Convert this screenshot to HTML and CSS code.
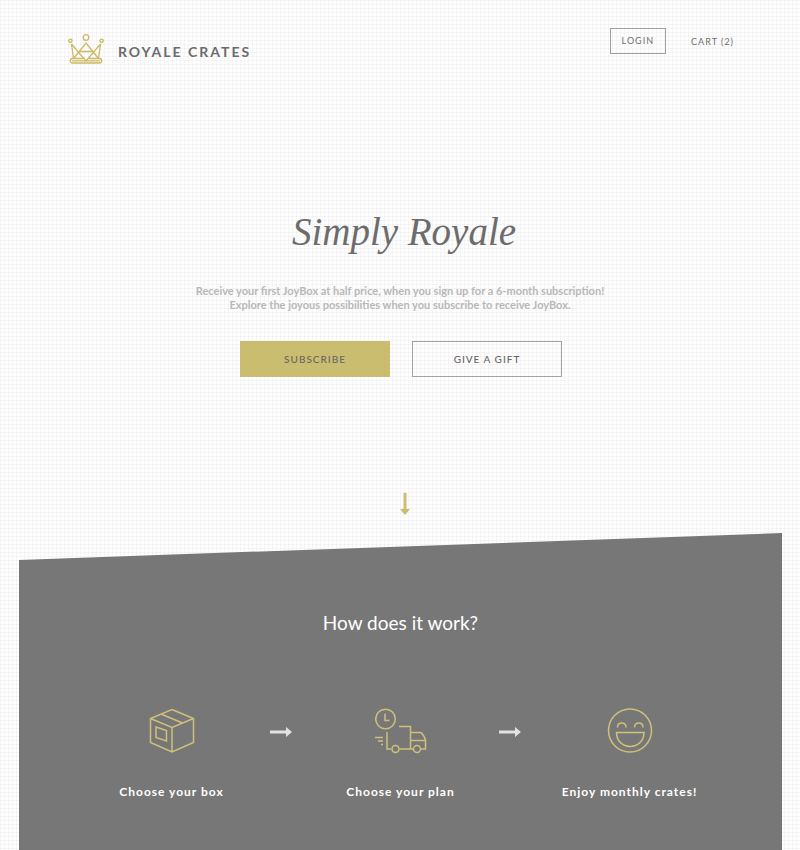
FILE: index.html
```html
<!DOCTYPE html>
<html lang="en">
<head>
<meta charset="utf-8">
<meta name="viewport" content="width=device-width, initial-scale=1">
<title>Royale Crates</title>
<link rel="stylesheet" href="styles.css">
</head>
<body>
<header class="header">
  <a class="brand" href="#">
    <svg class="crown" viewBox="0 0 36 30" aria-hidden="true">
      <circle cx="18" cy="3.5" r="2.8"/><circle cx="2.4" cy="6.8" r="1.7"/><circle cx="33.600" cy="6.800" r="1.700"/>
      <path d="M3.500 10 5.500 24.500M32.500 10 30.500 24.500M3.500 10 18 27 32.500 10M5.500 24.500 18 9 30.500 24.500M11 17.500H25"/>
      <path d="M15 24.500H4.500A2.200 2.200 0 0 0 4.500 29H31.500A2.200 2.200 0 0 0 31.500 24.500H21M4 26.800H32"/>
    </svg>
    <span class="brand-name">ROYALE CRATES</span>
  </a>
  <nav class="nav">
    <a class="login" href="#">LOGIN</a>
    <a class="cart" href="#">CART (2)</a>
  </nav>
</header>
<main>
  <section class="hero">
    <h1 class="title">Simply Royale</h1>
    <p class="intro">Receive your first JoyBox at half price, when you sign up for a 6-month subscription!<br>Explore the joyous possibilities when you subscribe to receive JoyBox.</p>
    <div class="actions">
      <button class="button primary" type="button">SUBSCRIBE</button>
      <button class="button" type="button">GIVE A GIFT</button>
    </div>
    <svg class="down" viewBox="0 0 10 22" aria-hidden="true"><path d="M3.500 0h3v16H10L5 22 0 16h3.500Z"/></svg>
  </section>
  <section class="how">
    <h2 class="how-title">How does it work?</h2>
    <div class="steps">
      <div class="step">
        <svg class="icon" viewBox="0 0 52 46" aria-hidden="true">
          <path d="M26 1.500 47.500 10.500V34.500L26 44 4.500 34.500V10.500ZM4.500 10.500 26 19.500 47.500 10.500M26 19.500V44M15 6 36.500 15"/>
          <path d="M10 19 20.500 22.500V33L10 29.500Z"/>
        </svg>
        <h3 class="step-title">Choose your box</h3>
      </div>
      <svg class="next" viewBox="0 0 22 10" aria-hidden="true"><path d="M0 3.500h16V0L22 5 16 10V6.500H0Z"/></svg>
      <div class="step">
        <svg class="icon" viewBox="0 0 52 46" aria-hidden="true">
          <circle cx="10.500" cy="11" r="9.800"/><path d="M10 5.500V12.500H14.500"/>
          <path d="M24 18.500H35.500V41M12 24V41H16M24.500 41H38M46 41H50.500V33Q50.500 31 49 28.500L47 25.500Q46.500 24.500 45 24.500H35.500M35.500 32.500H50M0 29.500H8M3 33H8M6 36.500H8"/>
          <circle cx="20.500" cy="41" r="3.500"/><circle cx="42" cy="41" r="3.500"/>
        </svg>
        <h3 class="step-title">Choose your plan</h3>
      </div>
      <svg class="next" viewBox="0 0 22 10" aria-hidden="true"><path d="M0 3.500h16V0L22 5 16 10V6.500H0Z"/></svg>
      <div class="step">
        <svg class="icon" viewBox="0 0 52 46" aria-hidden="true">
          <circle cx="26" cy="22.500" r="21.500"/>
          <path d="M13.500 19.500C13.500 13.500 22 13.500 22 19.500M30.500 19.500C30.500 13.500 39 13.500 39 19.500M12.500 24.500H40C40 43 12.500 43 12.500 24.500Z"/>
        </svg>
        <h3 class="step-title">Enjoy monthly crates!</h3>
      </div>
    </div>
  </section>
</main>
</body>
</html>
```
FILE: styles.css
```css
* { box-sizing: border-box; }

body {
  margin: 0;
  min-height: 100vh;
  display: flex;
  flex-direction: column;
  font-family: Lato, "Liberation Sans", sans-serif;
  color: #6c6c6c;
  background-color: #fefefe;
  background-image:
    linear-gradient(to right, #00000008 1px, transparent 1px),
    linear-gradient(to bottom, #00000008 1px, transparent 1px);
  background-size: 4px 4px;
}

a { color: inherit; text-decoration: none; }

h1, h2, h3, p { margin: 0; }

.header {
  display: flex;
  justify-content: space-between;
  align-items: flex-start;
  padding: 28px 66px 0 68px;
}

.brand { display: flex; align-items: center; gap: 14px; padding-top: 6px; }

.crown { width: 36px; height: 30px; fill: none; stroke: #cbb964; stroke-width: 1.3; }

.brand-name {
  font-size: 14px;
  font-weight: 700;
  letter-spacing: 2px;
  line-height: 16px;
  padding-top: 5px;
}

.nav {
  display: flex;
  align-items: center;
  gap: 25px;
  font-size: 9px;
  letter-spacing: 1px;
}

.login {
  padding: 0 11px;
  border: 1px solid #a0a0a0;
  line-height: 24px;
}

.hero {
  display: flex;
  flex-direction: column;
  align-items: center;
  text-align: center;
  padding-top: 140px;
}

.title {
  font-family: "Liberation Serif", cursive;
  font-size: 39px;
  font-style: italic;
  font-weight: 400;
  line-height: 56px;
  padding-left: 8px;
}

.intro {
  margin-top: 24px;
  font-size: 11px;
  font-weight: 700;
  line-height: 14px;
  color: #b8b8b8;
}

.actions { display: flex; gap: 22px; margin-top: 29px; padding-left: 2px; }

.button {
  width: 150px;
  height: 36px;
  padding: 0;
  border: 1px solid #a3a3a3;
  background: transparent;
  color: #666;
  font: 500 10px Lato, "Liberation Sans", sans-serif;
  letter-spacing: 1px;
}

.primary { background: #cbbd70; border-color: #cbbd70; }

.down { width: 10px; height: 22px; margin: 116px 0 0 10px; fill: #cbbd70; }

main { flex: 1; display: flex; flex-direction: column; }

.how {
  flex: 1;
  margin: 18px 18px 0 19px;
  padding: 77px 54px 50px;
  background: #777;
  color: #fff;
  clip-path: polygon(0 27px, 100% 0, 100% 100%, 0 100%);
}

.how-title {
  text-align: center;
  font-size: 19px;
  font-weight: 400;
  line-height: 26px;
}

.steps {
  display: grid;
  grid-template-columns: 1fr 32px 1fr 32px 1fr;
  margin-top: 72px;
}

.step { display: flex; flex-direction: column; align-items: center; }

.icon { width: 52px; height: 46px; fill: none; stroke: #cdc17a; stroke-width: 1.5; }

.step-title {
  margin-top: 29px;
  font-size: 12px;
  font-weight: 700;
  line-height: 18px;
  letter-spacing: 1px;
  white-space: nowrap;
}

.next { width: 22px; height: 10px; margin-top: 19px; fill: #e2e2e2; }
```
